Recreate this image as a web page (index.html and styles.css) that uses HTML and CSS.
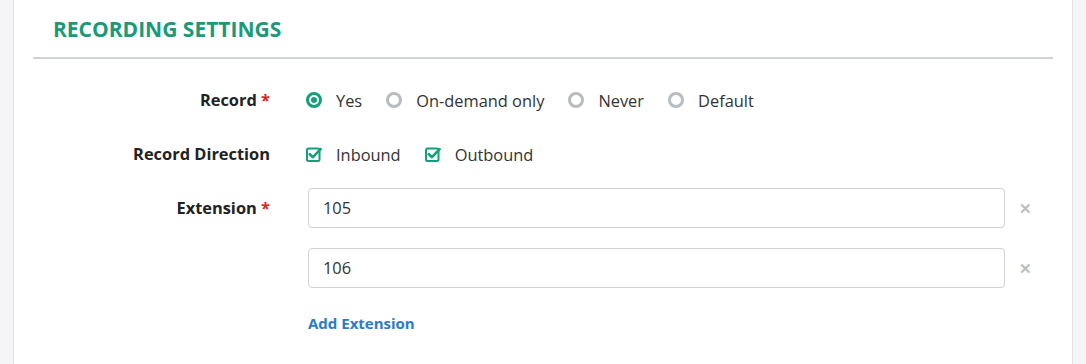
FILE: index.html
```html
<!DOCTYPE html>
<html>
<head>
<meta charset="utf-8">
<link rel="stylesheet" href="styles.css">
</head>
<body>
<div class="page">
  <div class="side side-left"></div>
  <div class="card">
    <h2 class="title">RECORDING SETTINGS</h2>
    <div class="sep"></div>
    <div class="form">
      <div class="row row-record">
        <div class="label">Record <span class="req">*</span></div>
        <div class="controls options">
          <label class="opt"><span class="radio on"></span><span>Yes</span></label>
          <label class="opt"><span class="radio"></span><span>On-demand only</span></label>
          <label class="opt"><span class="radio"></span><span>Never</span></label>
          <label class="opt"><span class="radio"></span><span>Default</span></label>
        </div>
      </div>
      <div class="row row-dir">
        <div class="label">Record Direction</div>
        <div class="controls options">
          <label class="opt"><svg class="check" width="16" height="16" viewBox="0 0 16 16"><rect x="1" y="2.5" width="12.5" height="12.5" rx="1.5" fill="none" stroke="#13a07a" stroke-width="2"/><path d="M3.8 8.2 L7 11.2 L14.6 3.2" fill="none" stroke="#13a07a" stroke-width="2.6" stroke-linecap="round" stroke-linejoin="round"/></svg><span>Inbound</span></label>
          <label class="opt"><svg class="check" width="16" height="16" viewBox="0 0 16 16"><rect x="1" y="2.5" width="12.5" height="12.5" rx="1.5" fill="none" stroke="#13a07a" stroke-width="2"/><path d="M3.8 8.2 L7 11.2 L14.6 3.2" fill="none" stroke="#13a07a" stroke-width="2.6" stroke-linecap="round" stroke-linejoin="round"/></svg><span>Outbound</span></label>
        </div>
      </div>
      <div class="row row-ext">
        <div class="label ext-label">Extension <span class="req">*</span></div>
        <div class="controls ext-list">
          <div class="ext-item"><div class="input">105</div><span class="remove">✕</span></div>
          <div class="ext-item"><div class="input">106</div><span class="remove">✕</span></div>
          <a class="add">Add Extension</a>
        </div>
      </div>
    </div>
  </div>
  <div class="side side-right"></div>
</div>
</body>
</html>
```
FILE: styles.css
```css
html, body {
  margin: 0;
  padding: 0;
  height: 364px;
  overflow: hidden;
  font-family: "Open Sans", "Noto Sans", sans-serif;
  background: #f5f5f7;
}
.page {
  display: flex;
  height: 364px;
}
.side {
  background: #f5f5f7;
}
.side-left {
  width: 13px;
  border-right: 1px solid #e2e3e6;
}
.side-right {
  width: 13px;
  border-left: 1px solid #e2e3e6;
}
.card {
  flex: 1;
  background: #fff;
  padding: 0 19px;
}
.title {
  margin: 0;
  padding: 15px 0 0 20px;
  height: 42px;
  box-sizing: border-box;
  font-size: 21px;
  font-weight: 700;
  color: #1a9a78;
  line-height: 28px;
}
.sep {
  height: 2px;
  background: #d0d4d8;
  margin-top: 15px;
}
.form {
  padding-top: 26px;
}
.row {
  display: grid;
  grid-template-columns: 237px 1fr;
  column-gap: 36px;
  align-items: center;
}
.row-dir {
  margin-top: 24px;
}
.row-ext {
  margin-top: 19px;
  align-items: start;
}
.label {
  text-align: right;
  font-size: 16.4px;
  font-weight: 700;
  color: #222;
  line-height: 30px;
}
.ext-label {
  line-height: 40px;
}
.req {
  color: #e02020;
}
.options {
  display: flex;
  align-items: center;
  height: 30px;
  gap: 24px;
  font-size: 16.4px;
  color: #333;
}
.opt {
  display: flex;
  align-items: center;
  gap: 14px;
}
.radio {
  width: 16px;
  height: 16px;
  box-sizing: border-box;
  border-radius: 50%;
  border: 3px solid #b7bcc1;
  background: #fff;
  position: relative;
}
.radio.on {
  border-color: #13a07a;
}
.radio.on::after {
  content: "";
  position: absolute;
  left: 2px;
  top: 2px;
  width: 6px;
  height: 6px;
  border-radius: 50%;
  background: #13a07a;
}
.check {
  display: block;
}
.ext-list {
  display: flex;
  flex-direction: column;
  padding-left: 2px;
}
.ext-item {
  display: flex;
  align-items: center;
  margin-bottom: 20px;
}
.input {
  flex: 1;
  height: 40px;
  box-sizing: border-box;
  border: 1px solid #cfd1d4;
  border-radius: 4px;
  padding: 0 14px;
  font-size: 16.4px;
  line-height: 38px;
  color: #333;
}
.remove {
  width: 12px;
  margin-left: 14px;
  margin-right: 22px;
  color: #bdbdbd;
  font-size: 15px;
  font-weight: 700;
  line-height: 20px;
}
.add {
  font-size: 15px;
  font-weight: 700;
  color: #2b7bc8;
  line-height: 22px;
  margin-top: 4px;
}
```
